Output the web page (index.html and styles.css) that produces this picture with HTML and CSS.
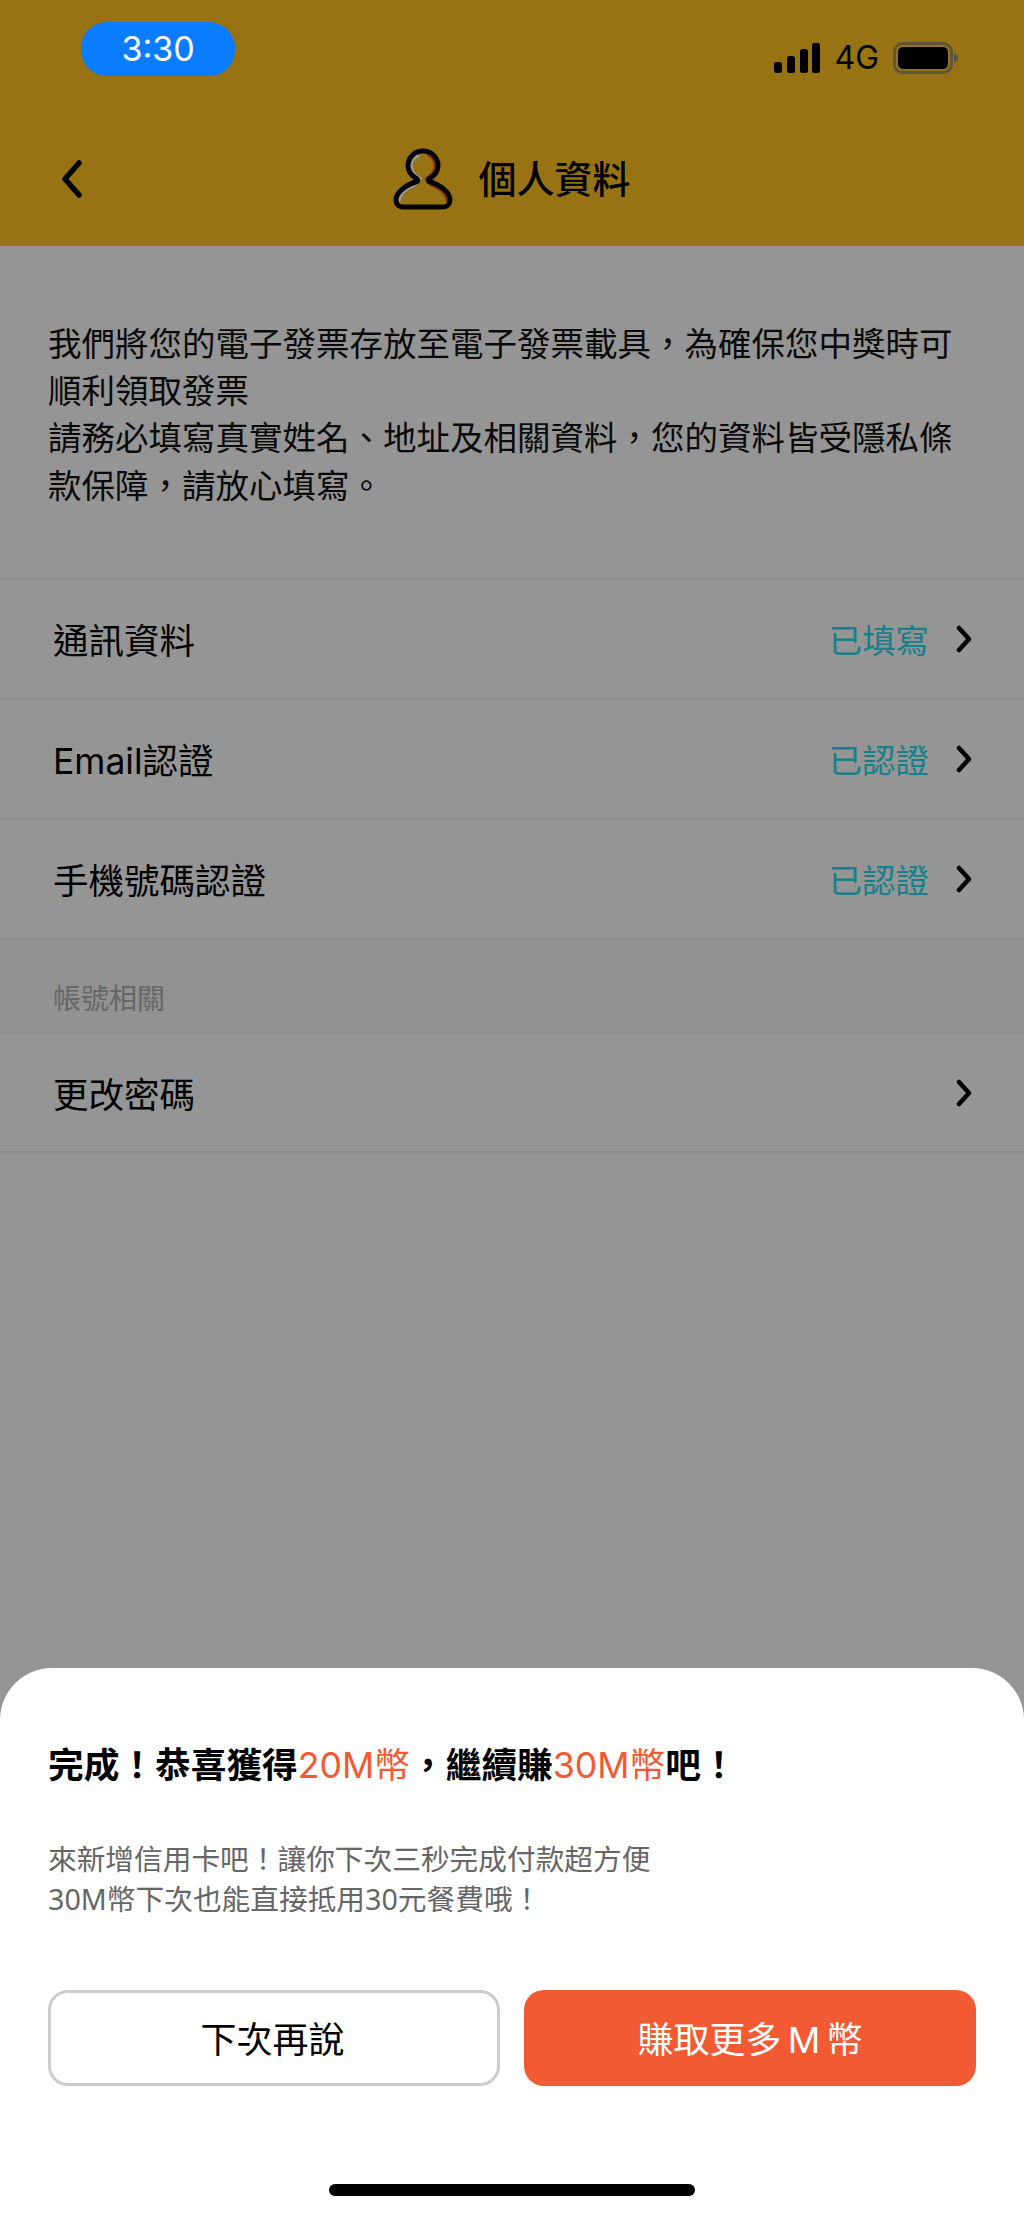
FILE: index.html
```html
<!DOCTYPE html>
<html lang="zh-Hant">
<head>
  <meta charset="UTF-8" />
  <meta name="viewport" content="width=device-width, initial-scale=1.0" />
  <title>個人資料</title>
  <link rel="stylesheet" href="styles.css">
</head>
<body>
  <div class="page">
    <header class="header">
      <div class="status-bar">
        <span class="time">3:30</span>
        <div class="status-icons">
          <svg class="signal" width="46" height="30" viewBox="0 0 46 30">
            <rect x="0" y="19" width="8" height="11" rx="2.5" />
            <rect x="13" y="13" width="8" height="17" rx="2.5" />
            <rect x="26" y="6" width="8" height="24" rx="2.5" />
            <rect x="38" y="0" width="8" height="30" rx="2.5" />
          </svg>
          <span class="network">4G</span>
          <svg class="battery" width="66" height="32" viewBox="0 0 66 32">
            <rect class="battery-shell" x="1.5" y="1.5" width="57" height="29" rx="8" />
            <rect x="5" y="5" width="50" height="22" rx="5" />
            <path class="battery-nub" d="M61 11c2.500 .8 4 2.600 4 5s-1.500 4.200-4 5z" />
          </svg>
        </div>
      </div>
      <nav class="nav">
        <svg class="back" width="24" height="38" viewBox="0 0 24 38">
          <path d="M19 3L5 19l14 16" />
        </svg>
        <div class="nav-title">
          <svg class="avatar" width="60" height="62" viewBox="0 0 60 62">
            <path class="avatar-left" d="M25 7.500C20.500 9 18 13 18 18c0 5 3.500 9.500 9 12.500M22 36.500C13 40 6.500 46 6 52" />
            <path class="avatar-right" d="M36 7.500C40 9 42 13 42 18c0 5-3.500 9.500-9 12.500M38 36.500c9 3.500 15.500 9.500 16 15.500" />
            <path class="avatar-line" d="M30 3C21 3 15 10 15 18C15 24 19 28 24 31C25 32 25 33 24 33.500C12 37 3 45 3 52C3 56 6 59 10 59H50C54 59 57 56 57 52C57 45 48 37 36 33.500C35 33 35 32 36 31C41 28 45 24 45 18C45 10 39 3 30 3Z" />
          </svg>
          <h1>個人資料</h1>
        </div>
      </nav>
    </header>

    <p class="intro">我們將您的電子發票存放至電子發票載具，為確保您中獎時可<br>順利領取發票<br>請務必填寫真實姓名、地址及相關資料，您的資料皆受隱私條<br>款保障，請放心填寫。</p>

    <ul class="list">
      <li class="row">
        <span class="row-label">通訊資料</span>
        <span class="row-status">已填寫</span>
        <svg class="chevron" width="16" height="28" viewBox="0 0 16 28"><path d="M3 3l10 11L3 25" /></svg>
      </li>
      <li class="row">
        <span class="row-label">Email認證</span>
        <span class="row-status">已認證</span>
        <svg class="chevron" width="16" height="28" viewBox="0 0 16 28"><path d="M3 3l10 11L3 25" /></svg>
      </li>
      <li class="row">
        <span class="row-label">手機號碼認證</span>
        <span class="row-status">已認證</span>
        <svg class="chevron" width="16" height="28" viewBox="0 0 16 28"><path d="M3 3l10 11L3 25" /></svg>
      </li>
    </ul>

    <div class="section-title">帳號相關</div>

    <ul class="list">
      <li class="row">
        <span class="row-label">更改密碼</span>
        <svg class="chevron" width="16" height="28" viewBox="0 0 16 28"><path d="M3 3l10 11L3 25" /></svg>
      </li>
    </ul>
  </div>

  <div class="overlay">
    <div class="sheet">
      <h2 class="sheet-title">完成！恭喜獲得<span class="accent">20M幣</span>，繼續賺<span class="accent">30M幣</span>吧！</h2>
      <p class="sheet-text">來新增信用卡吧！讓你下次三秒完成付款超方便<br>30M幣下次也能直接抵用30元餐費哦！</p>
      <div class="sheet-actions">
        <button class="btn btn-outline">下次再說</button>
        <button class="btn btn-primary">賺取更多 M 幣</button>
      </div>
      <div class="home-bar"></div>
    </div>
  </div>
</body>
</html>
```

FILE: styles.css
```css
html, body {
  margin: 0;
  padding: 0;
}

body {
  position: relative;
  width: 1024px;
  height: 2215px;
  overflow: hidden;
  background: #f9f9f9;
  color: #000;
  font-family: "Inter", "Noto Sans CJK TC", sans-serif;
}

.header {
  height: 246px;
  background: #fcc020;
}

.status-bar {
  display: flex;
  justify-content: space-between;
  height: 112px;
  padding: 22px 65px 0 81px;
  box-sizing: border-box;
}

.time {
  position: relative;
  z-index: 3;
  width: 154px;
  height: 54px;
  border-radius: 26px;
  background: #0a7cff;
  color: #fff;
  font-size: 34px;
  line-height: 54px;
  text-align: center;
}

.status-icons {
  display: flex;
  align-items: center;
  gap: 14px;
  height: 30px;
  margin-top: 21px;
}

.signal {
  fill: #000;
  margin-left: 1px;
}

.network {
  font-size: 32px;
  line-height: 30px;
}

.battery {
  fill: #000;
}

.battery-shell {
  fill: none;
  stroke: #7d7d7d;
  stroke-width: 3;
  opacity: 0.75;
}

.battery-nub {
  fill: #7d7d7d;
  opacity: 0.75;
}

.nav {
  display: flex;
  align-items: center;
  justify-content: center;
  position: relative;
  height: 134px;
}

.back {
  position: absolute;
  left: 60px;
  top: 48px;
  fill: none;
  stroke: #000;
  stroke-width: 5.5;
  stroke-linecap: round;
  stroke-linejoin: round;
}

.nav-title {
  display: flex;
  align-items: center;
  gap: 25px;
}

.nav-title h1 {
  margin: 0;
  font-size: 38px;
  font-weight: 500;
  line-height: 50px;
}

.avatar {
  fill: none;
  stroke-linecap: round;
  stroke-linejoin: round;
}

.avatar-line {
  stroke: #000;
  stroke-width: 5;
}

.avatar-left {
  stroke: #fff;
  stroke-width: 3.5;
}

.avatar-right {
  stroke: #ff5a30;
  stroke-width: 3.5;
}

.intro {
  height: 334px;
  margin: 0;
  padding: 75px 48px 0;
  box-sizing: border-box;
  font-size: 33.5px;
  line-height: 47.2px;
  color: #111;
  border-bottom: 3px solid #ececec;
}

.list {
  margin: 0;
  padding: 0;
  list-style: none;
}

.row {
  display: flex;
  align-items: center;
  height: 120px;
  padding: 0 52px 0 53px;
  box-sizing: border-box;
  border-bottom: 3px solid #ececec;
}

.row-label {
  flex: 1;
  font-size: 35.5px;
}

.row-status {
  margin-right: 27px;
  font-size: 33.4px;
  color: #25d5e8;
}

.chevron {
  fill: none;
  stroke: #000;
  stroke-width: 4.500;
  stroke-linecap: round;
  stroke-linejoin: round;
}

.section-title {
  height: 94px;
  padding: 39px 53px 0;
  box-sizing: border-box;
  background: #f4f4f4;
  font-size: 28px;
  line-height: 40px;
  color: #aaa;
}

.overlay {
  position: absolute;
  inset: 0;
  z-index: 2;
  display: flex;
  flex-direction: column;
  justify-content: flex-end;
  background: rgba(0, 0, 0, 0.4);
}

.sheet {
  padding: 72px 48px 19px;
  background: #fff;
  border-radius: 52px 52px 0 0;
}

.sheet-title {
  margin: 0;
  font-size: 35.700px;
  font-weight: 600;
  line-height: 50px;
}

.accent {
  color: #f15a33;
  font-weight: 400;
}

.sheet-text {
  margin: 49px 0 0;
  font-family: "Noto Sans", "Noto Sans CJK TC", sans-serif;
  font-size: 28.700px;
  line-height: 39.500px;
  color: #666;
}

.sheet-actions {
  display: grid;
  grid-template-columns: 1fr 1fr;
  gap: 24px;
  margin-top: 72px;
}

.btn {
  height: 96px;
  padding: 0 0 3px;
  border-radius: 20px;
  box-sizing: border-box;
  font-family: inherit;
  font-size: 36px;
}

.btn-outline {
  padding-right: 3px;
  background: #fff;
  border: 3px solid #ccc;
  color: #000;
}

.btn-primary {
  background: #f15a33;
  border: 0;
  color: #fff;
  word-spacing: -4px;
}

.home-bar {
  width: 366px;
  height: 12px;
  margin: 98px auto 0;
  border-radius: 6px;
  background: #000;
}
```
